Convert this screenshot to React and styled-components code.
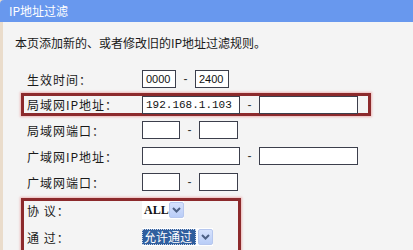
import React from "react";
import styled, { createGlobalStyle } from "styled-components";

const Global = createGlobalStyle`
  html, body {
    margin: 0;
    padding: 0;
    overflow: hidden;
    background: #f4f4f4;
  }
  body {
    font-family: "Noto Sans CJK SC", "DejaVu Sans", sans-serif;
    color: #1a1a1a;
  }
`;

const Page = styled.div`
  width: 413px;
  height: 250px;
  border-left: 3px solid #eadccb;
  box-sizing: border-box;
  background: #f4f4f4;
`;

const Header = styled.div`
  height: 22px;
  margin-left: -3px;
  background: #6898ee;
  border-top-left-radius: 4px;
  color: #fff;
  font-size: 12px;
  line-height: 22px;
  padding-left: 9px;
`;

const Intro = styled.div`
  height: 44px;
  box-sizing: border-box;
  padding: 13px 0 0 12px;
  font-size: 12px;
  line-height: 16px;
`;

const Form = styled.div`
  padding-left: 21px;
`;

const Row = styled.div`
  display: flex;
  align-items: center;
  height: ${(p) => p.h || 26}px;
`;

const Label = styled.div`
  width: 115px;
  padding-left: 3px;
  font-size: 12px;
  letter-spacing: 1px;
  white-space: pre;
`;

const Frame = styled.div`
  width: ${(p) => p.w}px;
  box-sizing: border-box;
  margin: ${(p) => p.m || "1px 0 1px -3px"};
  border: 3px solid #8c2a2c;
  box-shadow: 0 0 2px 1px rgba(236, 160, 160, 0.7);
`;

const Input = styled.div`
  width: ${(p) => p.w}px;
  height: 18px;
  box-sizing: border-box;
  border: 1px solid #3c3f4c;
  background: #fff;
  font-family: ${(p) => (p.mono ? '"Liberation Mono", monospace' : '"Liberation Sans", sans-serif')};
  font-size: 11px;
  line-height: 16px;
  padding-left: 3px;
  color: #111;
`;

const Sep = styled.span`
  width: 19px;
  text-align: center;
  font-family: "Liberation Sans", sans-serif;
  font-size: 12px;
  color: #333;
`;

const Combo = styled.div`
  display: flex;
  align-items: center;
  height: 18px;
  background: #fff;
  box-sizing: border-box;
`;

const ComboValue = styled.div`
  width: ${(p) => p.w}px;
  height: 16px;
  box-sizing: border-box;
  padding-left: 2px;
  font-family: ${(p) => (p.sel ? '"Noto Sans CJK SC", sans-serif' : '"Liberation Serif", serif')};
  font-size: 12px;
  font-weight: ${(p) => (p.sel ? 400 : 700)};
  line-height: 16px;
  color: ${(p) => (p.sel ? "#fff" : "#111")};
  background: ${(p) => (p.sel ? "#2f5e9e" : "#fff")};
  outline: ${(p) => (p.sel ? "1px dotted #c9d4e6" : "none")};
  outline-offset: -1px;
`;

const ArrowBtn = styled.div`
  width: 15px;
  height: 16px;
  margin-left: 2px;
  box-sizing: border-box;
  border: 1px solid #b6c7ee;
  border-radius: 2px;
  background: linear-gradient(#d6e2fd, #b9cdf7);
  display: flex;
  align-items: center;
  justify-content: center;
`;

function Chevron() {
  return (
    <svg width="9" height="6" viewBox="0 0 9 6">
      <path d="M1 1 L4.5 4.5 L8 1" stroke="#4d6185" strokeWidth="2" fill="none" />
    </svg>
  );
}

function Select({ value, w, sel }) {
  return (
    <Combo>
      <ComboValue w={w} sel={sel}>
        {value}
      </ComboValue>
      <ArrowBtn>
        <Chevron />
      </ArrowBtn>
    </Combo>
  );
}

function App() {
  return (
    <Page>
      <Global />
      <Header>IP地址过滤</Header>
      <Intro>本页添加新的、或者修改旧的IP地址过滤规则。</Intro>
      <Form>
        <Row>
          <Label>生效时间：</Label>
          <Input w={34}>0000</Input>
          <Sep>-</Sep>
          <Input w={34}>2400</Input>
        </Row>
        <Frame w={350}>
          <Row h={17}>
            <Label>局域网IP地址：</Label>
            <Input w={98} mono>
              192.168.1.103
            </Input>
            <Sep>-</Sep>
            <Input w={99} />
          </Row>
        </Frame>
        <Row>
          <Label>局域网端口：</Label>
          <Input w={38} />
          <Sep>-</Sep>
          <Input w={39} />
        </Row>
        <Row>
          <Label>广域网IP地址：</Label>
          <Input w={98} />
          <Sep>-</Sep>
          <Input w={99} />
        </Row>
        <Row>
          <Label>广域网端口：</Label>
          <Input w={38} />
          <Sep>-</Sep>
          <Input w={39} />
        </Row>
        <Frame w={220} m="3px 0 0 -3px">
          <Row h={18}>
            <Label>协 议：</Label>
            <Select value="ALL" w={25} />
          </Row>
          <Row h={36}>
            <Label>通 过：</Label>
            <Select value="允许通过" w={54} sel />
          </Row>
        </Frame>
      </Form>
    </Page>
  );
}

export default App;
